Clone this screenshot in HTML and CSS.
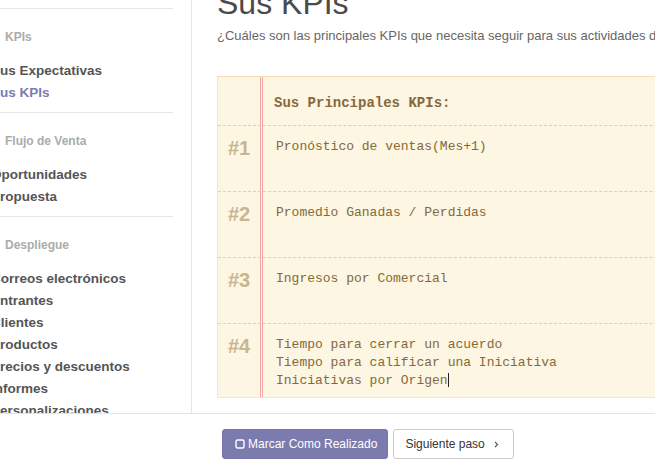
FILE: index.html
```html
<!DOCTYPE html>
<html lang="es">
<head>
<meta charset="utf-8">
<title>Sus KPIs</title>
<link rel="stylesheet" href="styles.css">
</head>
<body>
<div class="app">
  <div class="top">
    <aside class="sidebar">
      <section class="sec">
        <h4 class="sec-title">KPIs</h4>
        <ul class="items">
          <li>Sus Expectativas</li>
          <li class="active">Sus KPIs</li>
        </ul>
      </section>
      <section class="sec">
        <h4 class="sec-title">Flujo de Venta</h4>
        <ul class="items">
          <li>Oportunidades</li>
          <li>Propuesta</li>
        </ul>
      </section>
      <section class="sec">
        <h4 class="sec-title">Despliegue</h4>
        <ul class="items">
          <li>Correos electrónicos</li>
          <li>Entrantes</li>
          <li>Clientes</li>
          <li>Productos</li>
          <li>Precios y descuentos</li>
          <li>Informes</li>
          <li>Personalizaciones</li>
        </ul>
      </section>
    </aside>
    <main class="main">
      <h1 class="title">Sus KPIs</h1>
      <p class="lead">¿Cuáles son las principales KPIs que necesita seguir para sus actividades de ventas?</p>
      <div class="notebook">
        <div class="row head"><div class="num"></div><div class="txt">Sus Principales KPIs:</div></div>
        <div class="row item"><div class="num">#1</div><div class="txt">Pronóstico de ventas(Mes+1)</div></div>
        <div class="row item"><div class="num">#2</div><div class="txt">Promedio Ganadas / Perdidas</div></div>
        <div class="row item"><div class="num">#3</div><div class="txt">Ingresos por Comercial</div></div>
        <div class="row last"><div class="num">#4</div><div class="txt">Tiempo para cerrar un acuerdo
Tiempo para calificar una Iniciativa
Iniciativas por Origen<span class="caret"></span></div></div>
      </div>
    </main>
  </div>
  <footer class="footer">
    <button class="btn btn-primary" type="button">
      <svg class="ico-check" width="10" height="10" viewBox="0 0 10 10" aria-hidden="true"><rect x="1" y="1" width="8" height="8" rx="1.5" fill="none" stroke="#fff" stroke-width="1.4"/></svg>
      Marcar Como Realizado
    </button>
    <button class="btn btn-default" type="button">
      Siguiente paso
      <svg class="ico-chev" width="5" height="7" viewBox="0 0 5 7" aria-hidden="true"><path d="M1 1 L3.6 3.5 L1 6" fill="none" stroke="#555" stroke-width="1.1"/></svg>
    </button>
  </footer>
</div>
</body>
</html>
```
FILE: styles.css
```css
html, body {
  margin: 0;
  padding: 0;
}
body {
  width: 655px;
  height: 465px;
  overflow: hidden;
  background: #fff;
  font-family: "Liberation Sans", Arial, sans-serif;
}
.app {
  display: flex;
  flex-direction: column;
  height: 465px;
}
.top {
  display: flex;
  flex: none;
  height: 413px;
  overflow: hidden;
  border-bottom: 1px solid #e3e3e3;
}

/* Sidebar */
.sidebar {
  flex: none;
  width: 173px;
  padding: 8px 18px 0 0;
  border-right: 1px solid #e6e6e6;
  overflow: hidden;
}
.sec {
  border-top: 1px solid #e6e6e6;
  padding: 21px 0 8px;
}
.sec-title {
  margin: 0 0 16px;
  padding-left: 5px;
  font-size: 12px;
  line-height: 14px;
  font-weight: bold;
  color: #ababab;
}
.items {
  list-style: none;
  margin: 0 0 0 -9px;
  padding: 0;
}
.items li {
  font-size: 13.5px;
  line-height: 22px;
  font-weight: bold;
  color: #555;
  white-space: nowrap;
}
.items li.active {
  color: #7c7bad;
}

/* Main */
.main {
  flex: 1;
  min-width: 0;
  padding-left: 25px;
  overflow: hidden;
}
.title {
  margin: -13px 0 0;
  font-size: 32px;
  line-height: 32px;
  font-weight: normal;
  color: #4a4a4a;
}
.lead {
  margin: 8px 0 0;
  font-size: 13px;
  line-height: 18px;
  color: #666;
  white-space: nowrap;
}
.notebook {
  margin-top: 31px;
  width: 600px;
  border: 1px solid #f4e6ca;
  border-top-color: #f6dfb5;
  background:
    linear-gradient(to right,
      transparent 42px, #f6a5a2 42px, #f6a5a2 43px,
      transparent 43px, transparent 44px,
      #f6a5a2 44px, #f6a5a2 45px, transparent 45px),
    #fcf6e2;
  font-family: "Liberation Mono", "Courier New", monospace;
  color: #85693c;
}
.row {
  display: flex;
  border-bottom: 1px dashed #c6d4d4;
}
.row.head { height: 48px; }
.row.item { height: 65px; }
.row.last { height: 73px; border-bottom: none; }
.num {
  flex: none;
  width: 42px;
  padding-right: 3px;
  padding-top: 11px;
  text-align: center;
  font-family: "Liberation Sans", Arial, sans-serif;
  font-weight: bold;
  font-size: 20px;
  line-height: 23px;
  color: #c9b590;
}
.txt {
  padding-top: 12px;
  padding-left: 13px;
  font-size: 13px;
  line-height: 18px;
  white-space: pre;
}
.head .txt {
  padding-top: 17px;
  padding-left: 11px;
  font-size: 14px;
  font-weight: bold;
}
.caret {
  display: inline-block;
  width: 1px;
  height: 14px;
  background: #222;
  vertical-align: -3px;
}

/* Footer */
.footer {
  display: flex;
  gap: 5px;
  padding: 15px 0 0 222px;
}
.btn {
  display: inline-flex;
  align-items: center;
  box-sizing: border-box;
  height: 30px;
  margin: 0;
  border-radius: 3px;
  font-family: "Liberation Sans", Arial, sans-serif;
  font-size: 12px;
  cursor: pointer;
}
.btn-primary {
  background: #7c7bad;
  border: 1px solid #7574a6;
  color: #fff;
  padding: 0 10px 0 12px;
}
.ico-check {
  margin-right: 3px;
}
.btn-default {
  background: #fff;
  border: 1px solid #ccc;
  color: #333;
  padding: 0 14px 0 11px;
}
.ico-chev {
  margin-left: 9px;
}
```
